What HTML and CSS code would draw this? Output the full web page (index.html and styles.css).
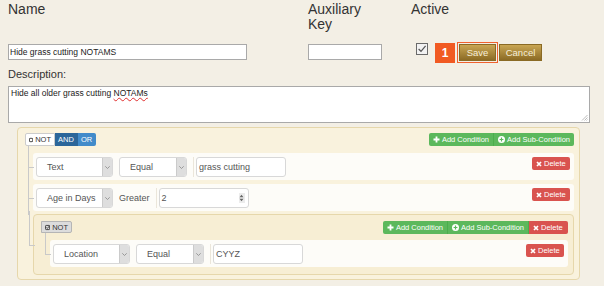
FILE: index.html
```html
<!DOCTYPE html>
<html lang="en">
<head>
  <meta charset="UTF-8">
  <title>Edit Filter</title>
  <link rel="stylesheet" href="styles.css">
</head>
<body>
  <div class="page">
    <div class="top-grid">
      <div class="col-label">Name</div>
      <div class="col-label">Auxiliary<br>Key</div>
      <div class="col-label">Active</div>

      <input class="text-input name-input" type="text" value="Hide grass cutting NOTAMS">
      <input class="text-input aux-input" type="text" value="">
      <div class="active-cell">
        <span class="check">
          <svg width="12" height="12" viewBox="0 0 12 12"><rect x="0.5" y="0.5" width="11" height="11" fill="#f2f2f2" stroke="#6a6a6a"/><path d="M2.6 6 L5 8.3 L9.6 2.8" fill="none" stroke="#555" stroke-width="1.2"/></svg>
        </span>
        <span class="badge">1</span>
        <span class="save-wrap"><button class="gold-btn save-btn">Save</button></span>
        <button class="gold-btn cancel-btn">Cancel</button>
      </div>
    </div>

    <div class="desc-label">Description:</div>
    <div class="desc-box">
      Hide all older grass cutting <span class="typo">NOTAMs</span>
      <svg class="grip" width="7" height="7" viewBox="0 0 7 7"><path d="M6.5 1 L1 6.5 M6.5 3.5 L3.5 6.5 M6.5 5.5 L5.5 6.5" stroke="#aaa" stroke-width="0.8"/></svg>
    </div>

    <div class="qb-group">
      <div class="qb-header">
        <div class="btn-group">
          <span class="btn btn-not">
            <svg width="6" height="6" viewBox="0 0 6 6"><rect x="0.6" y="0.6" width="4.8" height="4.8" rx="1" fill="none" stroke="#222" stroke-width="1.2"/></svg>NOT
          </span>
          <span class="btn btn-and">AND</span>
          <span class="btn btn-or">OR</span>
        </div>
        <div class="btn-group">
          <span class="btn btn-green">
            <svg width="7" height="7" viewBox="0 0 7 7"><path d="M3.5 0.5 V6.5 M0.5 3.5 H6.5" stroke="#fff" stroke-width="1.8"/></svg>Add Condition
          </span>
          <span class="btn btn-green">
            <svg width="7" height="7" viewBox="0 0 7 7"><circle cx="3.5" cy="3.5" r="3.5" fill="#fff"/><path d="M3.5 1.6 V5.4 M1.6 3.5 H5.4" stroke="#5cb85c" stroke-width="1.2"/></svg>Add Sub-Condition
          </span>
        </div>
      </div>

      <ul class="qb-list">
        <li class="qb-rule">
          <div class="select field-select"><span>Text</span><i class="caret"><svg width="5" height="3" viewBox="0 0 5 3"><path d="M0.3 0.3 L2.5 2.5 L4.7 0.3" fill="none" stroke="#888" stroke-width="0.8"/></svg></i></div>
          <div class="select op-select"><span>Equal</span><i class="caret"><svg width="5" height="3" viewBox="0 0 5 3"><path d="M0.3 0.3 L2.5 2.5 L4.7 0.3" fill="none" stroke="#888" stroke-width="0.8"/></svg></i></div>
          <div class="value-cell"><div class="value-input">grass cutting</div></div>
          <span class="btn btn-red">
            <svg width="6" height="6" viewBox="0 0 6 6"><path d="M1 1 L5 5 M5 1 L1 5" stroke="#fff" stroke-width="1.7"/></svg>Delete
          </span>
        </li>

        <li class="qb-rule">
          <div class="select field-select"><span>Age in Days</span><i class="caret"><svg width="5" height="3" viewBox="0 0 5 3"><path d="M0.3 0.3 L2.5 2.5 L4.7 0.3" fill="none" stroke="#888" stroke-width="0.8"/></svg></i></div>
          <div class="op-text">Greater</div>
          <div class="value-cell">
            <div class="value-input number-input">2
              <span class="spinner"><svg width="5" height="8" viewBox="0 0 5 8"><path d="M0.5 3.2 L2.5 0.8 L4.5 3.2 Z M0.5 4.8 L2.5 7.2 L4.5 4.8 Z" fill="#666"/></svg></span>
            </div>
          </div>
          <span class="btn btn-red">
            <svg width="6" height="6" viewBox="0 0 6 6"><path d="M1 1 L5 5 M5 1 L1 5" stroke="#fff" stroke-width="1.7"/></svg>Delete
          </span>
        </li>

        <li class="qb-group qb-sub">
          <div class="qb-header">
            <div class="btn-group">
              <span class="btn btn-not on">
                <svg width="7" height="7" viewBox="0 0 7 7"><rect x="0.7" y="0.7" width="5.6" height="5.6" rx="1" fill="none" stroke="#333" stroke-width="1.2"/><path d="M2 3.5 L3.2 4.7 L6.4 1" fill="none" stroke="#333" stroke-width="1.2"/></svg>NOT
              </span>
            </div>
            <div class="btn-group">
              <span class="btn btn-green">
                <svg width="7" height="7" viewBox="0 0 7 7"><path d="M3.5 0.5 V6.5 M0.5 3.5 H6.5" stroke="#fff" stroke-width="1.8"/></svg>Add Condition
              </span>
              <span class="btn btn-green">
                <svg width="7" height="7" viewBox="0 0 7 7"><circle cx="3.5" cy="3.5" r="3.5" fill="#fff"/><path d="M3.5 1.6 V5.4 M1.6 3.5 H5.4" stroke="#5cb85c" stroke-width="1.2"/></svg>Add Sub-Condition
              </span>
              <span class="btn btn-red">
                <svg width="6" height="6" viewBox="0 0 6 6"><path d="M1 1 L5 5 M5 1 L1 5" stroke="#fff" stroke-width="1.7"/></svg>Delete
              </span>
            </div>
          </div>

          <ul class="qb-list">
            <li class="qb-rule">
              <div class="select field-select"><span>Location</span><i class="caret"><svg width="5" height="3" viewBox="0 0 5 3"><path d="M0.3 0.3 L2.5 2.5 L4.7 0.3" fill="none" stroke="#888" stroke-width="0.8"/></svg></i></div>
              <div class="select op-select"><span>Equal</span><i class="caret"><svg width="5" height="3" viewBox="0 0 5 3"><path d="M0.3 0.3 L2.5 2.5 L4.7 0.3" fill="none" stroke="#888" stroke-width="0.8"/></svg></i></div>
              <div class="value-cell"><div class="value-input">CYYZ</div></div>
              <span class="btn btn-red">
                <svg width="6" height="6" viewBox="0 0 6 6"><path d="M1 1 L5 5 M5 1 L1 5" stroke="#fff" stroke-width="1.7"/></svg>Delete
              </span>
            </li>
          </ul>
        </li>
      </ul>
    </div>
  </div>
</body>
</html>
```

FILE: styles.css
```css
* {
  box-sizing: border-box;
}

body {
  margin: 0;
  background-color: #f3efe5;
  color: #333;
  font-family: "Liberation Sans", Arial, sans-serif;
}

.page {
  padding: 2px 8px 0;
}

/* top form */
.top-grid {
  display: grid;
  grid-template-columns: 300px 103px 1fr;
  grid-template-rows: 30px 22px;
  row-gap: 10px;
}

.col-label {
  font-size: 14px;
  line-height: 15px;
  color: #333;
}

.text-input {
  margin: 2px 0 0;
  height: 16px;
  padding: 0 1px;
  border: 1px solid #a9a9a9;
  background: #fff;
  font-family: "Liberation Sans", Arial, sans-serif;
  font-size: 8.5px;
  color: #222;
  outline: none;
}

.name-input {
  width: 239px;
}

.aux-input {
  width: 74px;
}

.active-cell {
  display: flex;
  align-items: flex-start;
}

.check {
  display: block;
  width: 12px;
  height: 12px;
  margin: 1px 0 0 5px;
}

.check svg {
  display: block;
}

.badge {
  width: 20px;
  height: 20px;
  margin: 1px 0 0 7px;
  background-color: #f15a22;
  color: #fff;
  font-weight: bold;
  font-size: 12px;
  line-height: 20px;
  text-align: center;
}

.save-wrap {
  display: block;
  margin-left: 2px;
  padding: 1px;
  border: 1px solid #f0622e;
}

.gold-btn {
  height: 17px;
  padding: 0;
  border: 1px solid #8a6a24;
  background: linear-gradient(#c9a653, #8c6b25);
  color: #f6eed9;
  font-family: "Liberation Sans", Arial, sans-serif;
  font-size: 9.5px;
  line-height: 15px;
  cursor: pointer;
}

.save-btn {
  display: block;
  width: 37px;
}

.cancel-btn {
  width: 43px;
  margin: 2px 0 0 1px;
}

/* description */
.desc-label {
  margin-top: 4px;
  font-size: 11px;
  line-height: 13px;
}

.desc-box {
  position: relative;
  width: 582px;
  height: 37px;
  margin-top: 5px;
  padding: 1px 2px;
  border: 1px solid #a9a9a9;
  background: #fff;
  font-size: 8.5px;
  line-height: 10px;
  color: #222;
}

.typo {
  text-decoration: underline wavy #e03030;
  text-decoration-thickness: 0.7px;
}

.grip {
  position: absolute;
  right: 1px;
  bottom: 1px;
}

/* query builder */
.qb-group {
  width: 563px;
  margin: 4px 0 0 9px;
  padding: 5px 5px 4px 7px;
  border: 1px solid #e6d7ab;
  border-radius: 4px;
  background-color: #f9f2dd;
}

.qb-header {
  display: flex;
  justify-content: space-between;
  height: 13px;
}

.btn-group {
  display: flex;
}

.btn {
  display: flex;
  align-items: center;
  gap: 2px;
  height: 13px;
  padding: 0 3px;
  font-size: 7.5px;
  line-height: 13px;
  color: #fff;
  white-space: nowrap;
}

.btn-group .btn:first-child {
  border-radius: 2px 0 0 2px;
}

.btn-group .btn:last-child {
  border-radius: 0 2px 2px 0;
}

.btn-not {
  width: 30px;
  border: 1px solid #ccc;
  background: #fff;
  color: #333;
}

.btn-not.on {
  width: 31px;
  height: 12px;
  border-color: #b5b5b5;
  background: #dcdcdc;
  border-radius: 2px;
}

.btn-and {
  width: 23px;
  background-color: #2b669a;
}

.btn-or {
  width: 18px;
  background-color: #428bca;
}

.btn-green {
  background-color: #5cb85c;
  border-right: 1px solid #4cae4c;
  padding: 0 4px;
}

.btn-green:last-child {
  border-right: none;
}

.btn-red {
  background-color: #d9534f;
  border-radius: 2px;
  padding: 0 4px;
}

.qb-header .btn-red {
  width: 39px;
  height: 13px;
}

.qb-list {
  list-style: none;
  margin: 7px 0 0;
  padding: 0 0 0 8px;
  display: flex;
  flex-direction: column;
  gap: 4px;
}

.qb-list > li {
  position: relative;
}

.qb-list > li::before,
.qb-list > li::after {
  content: "";
  position: absolute;
  left: -5px;
  width: 5px;
  border-left: 1px solid #c9c9c9;
}

.qb-list > li::before {
  top: -4px;
  height: calc(50% + 4px);
  border-bottom: 1px solid #c9c9c9;
}

.qb-list > li:first-child::before {
  top: -7px;
  height: calc(50% + 7px);
}

.qb-list > li::after {
  top: 50%;
  height: calc(50% + 4px);
}

.qb-list > li:last-child::after {
  display: none;
}

.qb-rule {
  display: flex;
  align-items: flex-start;
  height: 27px;
  padding: 4px 4px 3px 3px;
  background-color: #fdfcf8;
  border-radius: 3px;
}

.qb-rule .btn-red {
  margin-left: auto;
  width: 38px;
}

.select {
  display: flex;
  height: 20px;
  border: 1px solid #d8d8d8;
  border-radius: 3px;
  background: #fff;
  font-size: 9px;
  color: #555;
  overflow: hidden;
}

.select span {
  flex: 1;
  padding-left: 10px;
  line-height: 18px;
}

.select .caret {
  display: flex;
  align-items: center;
  justify-content: center;
  width: 10px;
  background-color: #dedede;
  border-left: 1px solid #cbcbcb;
}

.field-select {
  width: 77px;
}

.op-select {
  width: 68px;
  margin-left: 6px;
}

.op-text {
  margin-left: 6px;
  font-size: 9px;
  line-height: 20px;
  color: #555;
}

.value-cell {
  margin-left: 6px;
  padding-left: 2px;
  border-left: 1px solid #ebe6da;
}

.value-input {
  display: flex;
  align-items: center;
  width: 90px;
  height: 20px;
  padding-left: 2px;
  border: 1px solid #d8d8d8;
  border-radius: 3px;
  background: #fff;
  font-size: 9px;
  color: #555;
}

.number-input {
  position: relative;
}

.spinner {
  position: absolute;
  right: 3px;
  top: 4px;
  width: 6px;
  height: 10px;
  display: flex;
  align-items: center;
  justify-content: center;
  background: #ececec;
}

/* nested group */
.qb-sub {
  width: auto;
  margin: -1px 0 0;
  padding: 6px 5px 7px 7px;
  background-color: #f7eed4;
}

.qb-sub .qb-header {
  height: 12px;
}

.qb-sub .qb-list {
  margin-top: 7px;
  padding-left: 9px;
}

.qb-sub .qb-list > li::before,
.qb-sub .qb-list > li::after {
  left: -5px;
}
```
